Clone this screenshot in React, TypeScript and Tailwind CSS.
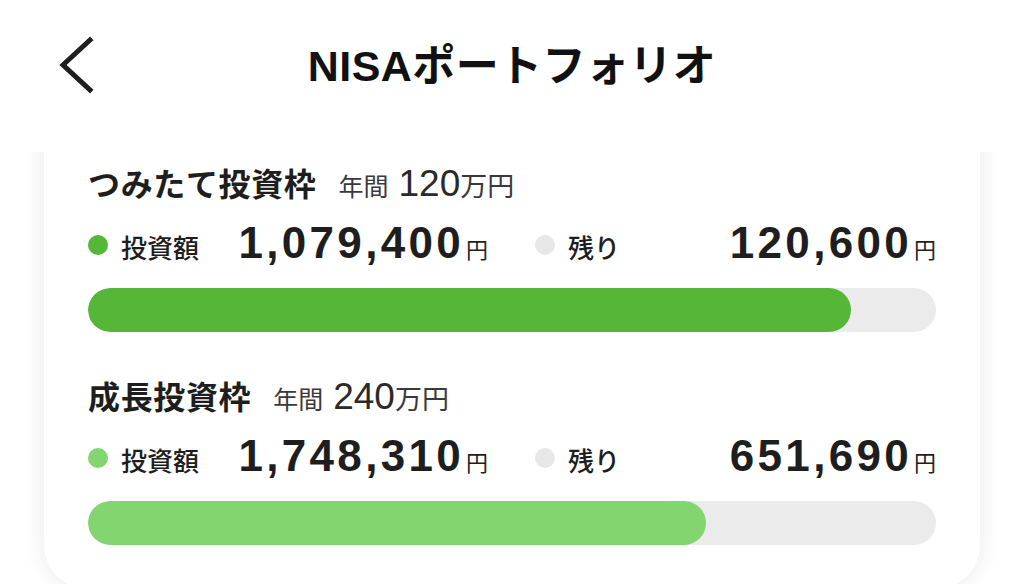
const frames = [
  {
    id: "tsumitate",
    name: "つみたて投資枠",
    yearly: "120",
    invested: 1079400,
    limit: 1200000,
    color: "bg-[#55b638]",
  },
  {
    id: "seicho",
    name: "成長投資枠",
    yearly: "240",
    invested: 1748310,
    limit: 2400000,
    color: "bg-[#82d56f]",
  },
];

const yen = (n: number) => n.toLocaleString("en-US");

function FrameSection({ frame }: { frame: (typeof frames)[number] }) {
  const rest = frame.limit - frame.invested;
  const pct = (frame.invested / frame.limit) * 100;

  return (
    <section>
      {/* Title */}
      <div className="flex h-10 items-baseline text-[#1e1e1e]">
        <h2 className="text-[32px] font-bold leading-10 tracking-[0.02em]">{frame.name}</h2>
        <span className="ml-[22px] text-[25px] text-[#3a3a3a]">年間</span>
        <span className="ml-[10px] text-[37px] leading-none text-[#2a2a2a]">{frame.yearly}</span>
        <span className="text-[27px] text-[#3a3a3a]">万円</span>
      </div>

      {/* Amounts */}
      <div className="mt-4 flex h-12 items-baseline text-[#1e1e1e]">
        <div className="flex w-[400px] items-baseline">
          <span className={`h-5 w-5 self-center rounded-full ${frame.color}`} />
          <span className="ml-[13px] text-[26px] font-medium">投資額</span>
          <span className="flex-1 text-right text-[44px] font-bold leading-none tracking-[0.075em]">
            {yen(frame.invested)}
          </span>
          <span className="ml-[2px] text-[22px]">円</span>
        </div>
        <div className="ml-[47px] flex w-[401px] items-baseline">
          <span className="h-5 w-5 self-center rounded-full bg-[#e8e8e8]" />
          <span className="ml-[13px] text-[26px] font-medium">残り</span>
          <span className="flex-1 text-right text-[44px] font-bold leading-none tracking-[0.075em]">
            {yen(rest)}
          </span>
          <span className="ml-[2px] text-[22px]">円</span>
        </div>
      </div>

      {/* Progress bar */}
      <div className="mt-[19px] h-11 w-[848px] overflow-hidden rounded-full bg-[#ebebeb]">
        <div className={`h-full rounded-full ${frame.color}`} style={{ width: `${pct}%` }} />
      </div>
    </section>
  );
}

export default function App() {
  return (
    <div className="h-[584px] w-[1024px] overflow-hidden bg-white font-['Liberation_Sans','Noto_Sans_CJK_JP',sans-serif]">
      {/* Header */}
      <header className="relative z-10 flex h-[152px] items-start bg-white">
        <button className="ml-[56px] mt-[36px] flex h-[60px] w-[44px] items-center justify-center">
          <svg width="44" height="60" viewBox="0 0 44 60" fill="none">
            <path
              d="M34 4 L7 29 L34 54"
              stroke="#1e1e1e"
              strokeWidth="5"
              strokeLinecap="square"
              strokeLinejoin="miter"
            />
          </svg>
        </button>
        <h1 className="absolute left-0 right-0 top-[43px] text-center text-[43px] font-bold leading-[46px] tracking-[0.01em] text-[#111]">
          NISAポートフォリオ
        </h1>
      </header>

      {/* Card */}
      <div className="overflow-hidden pb-10">
        <div className="mx-[44px] -mt-[40px] rounded-b-[44px] bg-white px-[44px] pb-[44px] pt-[53px] shadow-[0_0_22px_rgba(0,0,0,0.09)]">
          <div className="flex flex-col gap-[46px]">
            {frames.map((f) => (
              <FrameSection key={f.id} frame={f} />
            ))}
          </div>
        </div>
      </div>
    </div>
  );
}
